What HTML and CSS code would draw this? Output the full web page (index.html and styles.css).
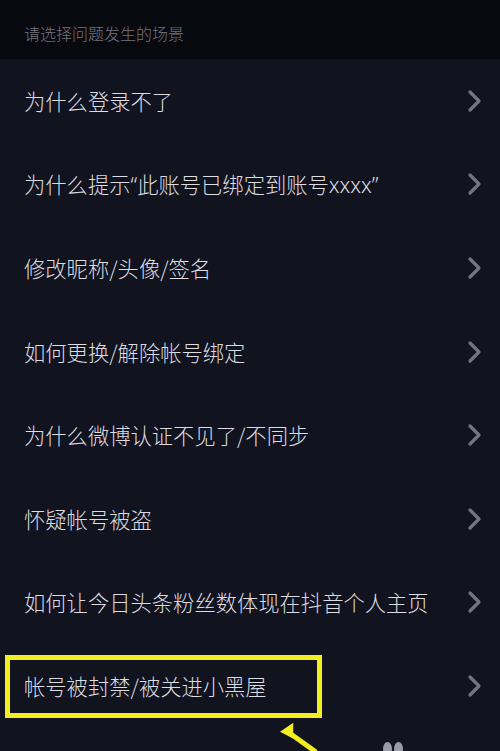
FILE: index.html
```html
<!DOCTYPE html>
<html lang="zh-CN">
<head>
    <meta charset="UTF-8">
    <meta name="viewport" content="width=device-width, initial-scale=1.0">
    <title>帐号问题</title>
    <link rel="stylesheet" href="styles.css">
</head>
<body>
    <div class="page">
        <div class="section-title">请选择问题发生的场景</div>
        <ul class="question-list">
            <li class="question">
                <span class="question-text">为什么登录不了</span>
                <svg class="chevron" viewBox="0 0 16 24"><path d="M3 3 L12 12 L3 21"/></svg>
            </li>
            <li class="question">
                <span class="question-text">为什么提示<span class="latin">“</span>此账号已绑定到账号<span class="latin">xxxx”</span></span>
                <svg class="chevron" viewBox="0 0 16 24"><path d="M3 3 L12 12 L3 21"/></svg>
            </li>
            <li class="question">
                <span class="question-text">修改昵称/头像/签名</span>
                <svg class="chevron" viewBox="0 0 16 24"><path d="M3 3 L12 12 L3 21"/></svg>
            </li>
            <li class="question">
                <span class="question-text">如何更换/解除帐号绑定</span>
                <svg class="chevron" viewBox="0 0 16 24"><path d="M3 3 L12 12 L3 21"/></svg>
            </li>
            <li class="question">
                <span class="question-text">为什么微博认证不见了/不同步</span>
                <svg class="chevron" viewBox="0 0 16 24"><path d="M3 3 L12 12 L3 21"/></svg>
            </li>
            <li class="question">
                <span class="question-text">怀疑帐号被盗</span>
                <svg class="chevron" viewBox="0 0 16 24"><path d="M3 3 L12 12 L3 21"/></svg>
            </li>
            <li class="question">
                <span class="question-text">如何让今日头条粉丝数体现在抖音个人主页</span>
                <svg class="chevron" viewBox="0 0 16 24"><path d="M3 3 L12 12 L3 21"/></svg>
            </li>
            <li class="question">
                <span class="question-text">帐号被封禁/被关进小黑屋</span>
                <svg class="chevron" viewBox="0 0 16 24"><path d="M3 3 L12 12 L3 21"/></svg>
            </li>
        </ul>

        <!-- annotation drawn over the screenshot -->
        <div class="highlight"></div>
        <svg class="pointer" viewBox="0 0 60 32">
            <path class="pointer-line" d="M18 12 L46 32"/>
            <path class="pointer-head" d="M11 9 L27 9 L18 22 Z"/>
        </svg>
        <div class="blobs">
            <span class="blob"></span>
            <span class="blob"></span>
        </div>
    </div>
</body>
</html>
```

FILE: styles.css
```css
body {
    margin: 0;
    background-color: #11131e;
    font-family: "Noto Sans CJK SC", "Noto Sans", sans-serif;
}

.page {
    position: relative;
    height: 751px;
    overflow: hidden;
}

.section-title {
    height: 59px;
    box-sizing: border-box;
    padding: 21px 0 0 24px;
    background-color: #08080f;
    color: #74747d;
    font-size: 16px;
    font-weight: 300;
    line-height: 24px;
}

.question-list {
    list-style: none;
    margin: 0;
    padding: 0;
}

.question {
    height: 83.6px;
    display: flex;
    align-items: center;
    justify-content: space-between;
    padding: 0 17px 0 24px;
}

.question-text {
    color: #dcdce1;
    font-size: 21.3px;
    font-weight: 300;
    line-height: 30px;
}

.latin {
    font-family: "Noto Sans", sans-serif;
    font-weight: 300;
}

.chevron {
    width: 16px;
    height: 24px;
}

.chevron path {
    fill: none;
    stroke: #75757e;
    stroke-width: 3.2;
    stroke-linecap: round;
    stroke-linejoin: round;
}

.highlight {
    position: absolute;
    left: 5px;
    top: 655px;
    width: 317px;
    height: 63px;
    box-sizing: border-box;
    border: 5px solid #f2ee1f;
}

.pointer {
    position: absolute;
    left: 270px;
    top: 720px;
    width: 60px;
    height: 32px;
}

.pointer-line {
    stroke: #f2ee1f;
    stroke-width: 5;
}

.pointer-head {
    fill: #f2ee1f;
    transform: rotate(-34deg);
    transform-origin: 15px 12px;
}

.blobs {
    position: absolute;
    left: 383px;
    top: 742px;
    display: flex;
    gap: 2px;
}

.blob {
    width: 9px;
    height: 14px;
    border-radius: 50%;
    background-color: #9c9ca8;
}
```
